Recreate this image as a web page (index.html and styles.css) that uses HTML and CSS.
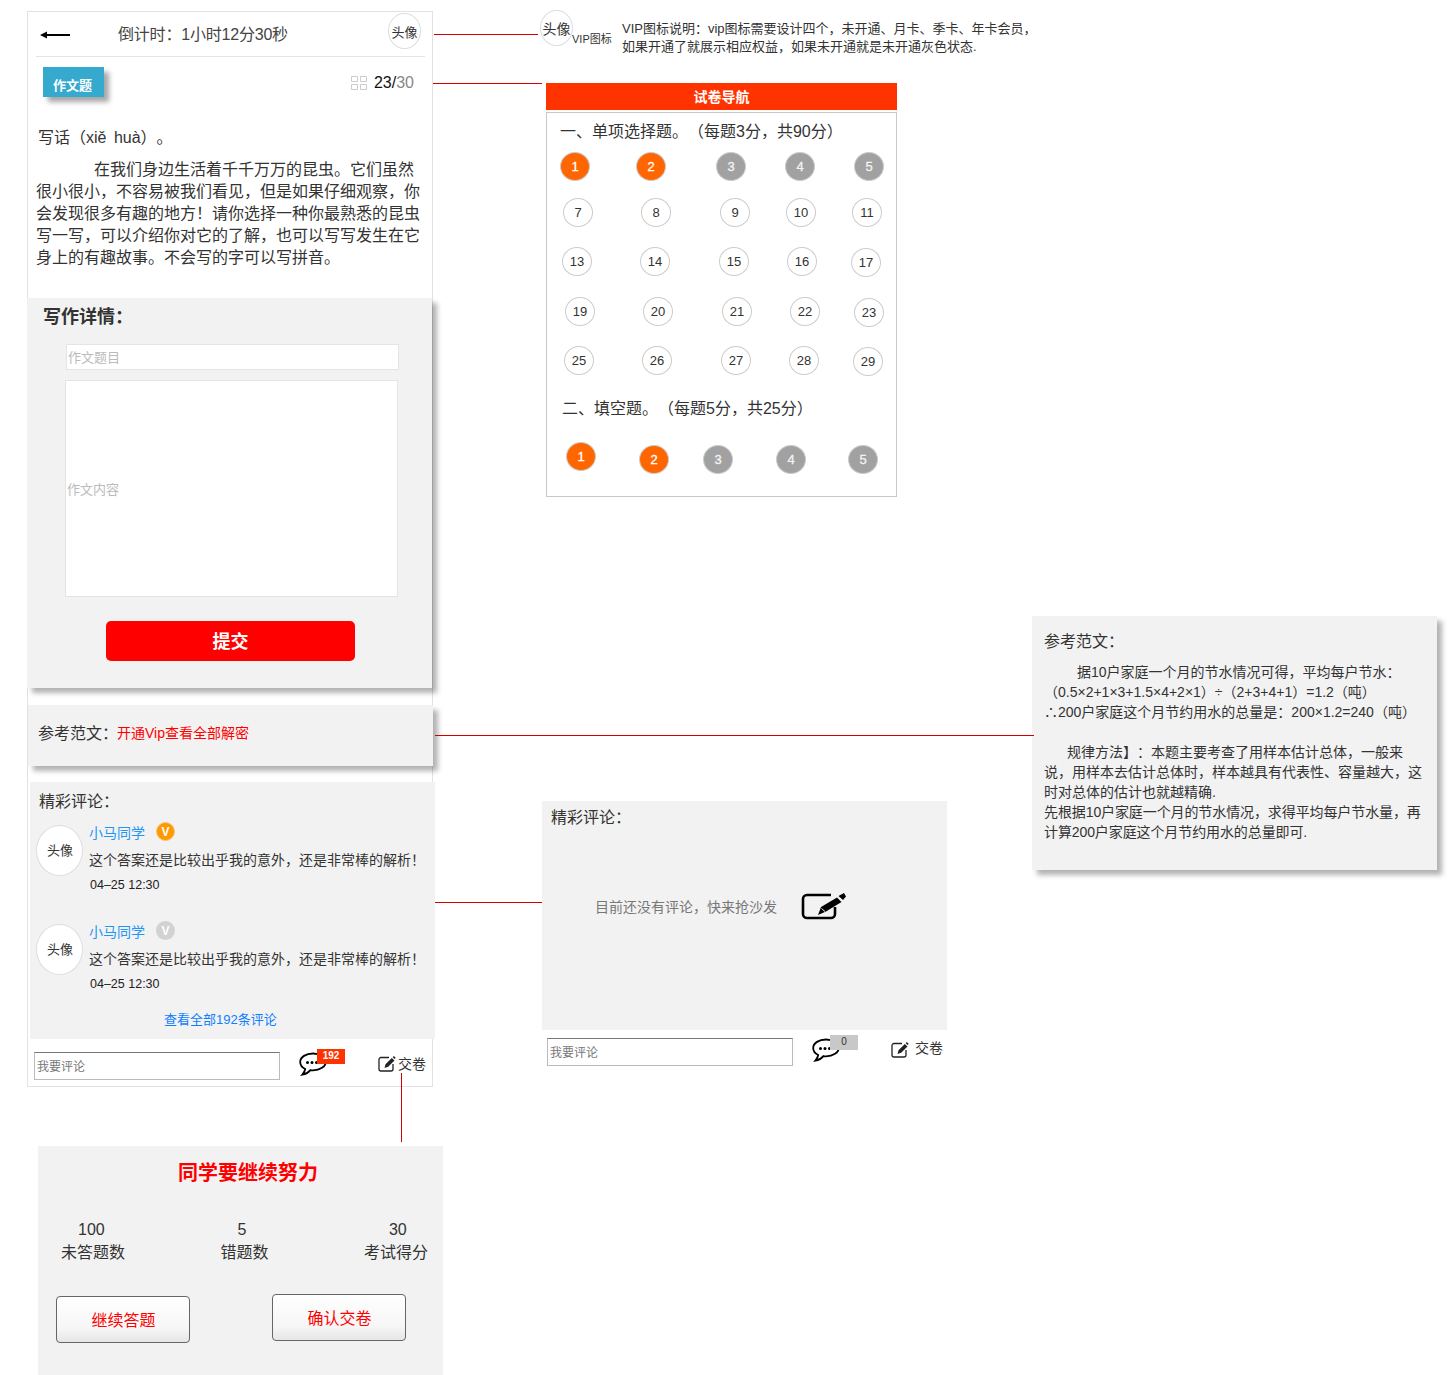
FILE: index.html

```html
<!DOCTYPE html>
<html lang="zh-CN">
<head>
    <meta charset="UTF-8" />
    <meta name="viewport" content="width=device-width, initial-scale=1.0"/>
    <title>作文题原型</title>
    <link rel="stylesheet" href="styles.css">
</head>
<body>
<div class="canvas">

    <!-- annotation lines -->
    <div class="line line-avatar"></div>
    <div class="line line-nav"></div>
    <div class="line line-ref"></div>
    <div class="line line-empty"></div>
    <div class="line line-submit"></div>

    <!-- main phone frame -->
    <div class="phone">
        <div class="top-bar">
            <svg class="back" width="30" height="8" viewBox="0 0 30 8"><path d="M0 4 7 .5v2.600h23v1.800H7v2.600z" fill="#000"/></svg>
            <span class="countdown">倒计时：1小时12分30秒</span>
            <span class="avatar avatar-top">头像</span>
        </div>
        <div class="meta-row">
            <span class="tag">作文题</span>
            <span class="progress">
                <svg width="16" height="14" viewBox="0 0 16 14"><path d="M.5.5h6v5h-6zM9.500.5h6v5h-6zM.5 8.500h6v5h-6zM9.500 8.500h6v5h-6z" fill="none" stroke="#ccc"/></svg>
                <span class="progress-now">23/</span><span class="progress-all">30</span>
            </span>
        </div>
        <p class="question">写话（xiě huà）。</p>
        <p class="question-body">在我们身边生活着千千万万的昆虫。它们虽然很小很小，不容易被我们看见，但是如果仔细观察，你会发现很多有趣的地方！请你选择一种你最熟悉的昆虫写一写，可以介绍你对它的了解，也可以写写发生在它身上的有趣故事。不会写的字可以写拼音。</p>

        <div class="writing panel-shadow">
            <h2 class="writing-title">写作详情：</h2>
            <div class="field field-title">作文题目</div>
            <div class="field field-content">作文内容</div>
            <div class="submit">提交</div>
        </div>

        <div class="unlock panel-shadow">
            <span>参考范文：</span><span class="unlock-link">开通Vip查看全部解密</span>
        </div>

        <div class="comments">
            <div class="comments-title">精彩评论：</div>
            <div class="comment comment-first">
                <span class="avatar avatar-comment">头像</span>
                <div class="comment-main">
                    <div class="comment-name">小马同学<span class="vip vip-on">V</span></div>
                    <div class="comment-text">这个答案还是比较出乎我的意外，还是非常棒的解析！</div>
                    <div class="comment-date">04–25 12:30</div>
                </div>
            </div>
            <div class="comment">
                <span class="avatar avatar-comment">头像</span>
                <div class="comment-main">
                    <div class="comment-name">小马同学<span class="vip vip-off">V</span></div>
                    <div class="comment-text">这个答案还是比较出乎我的意外，还是非常棒的解析！</div>
                    <div class="comment-date">04–25 12:30</div>
                </div>
            </div>
            <div class="comments-all">查看全部192条评论</div>
        </div>

        <div class="reply-bar">
            <div class="reply-input">我要评论</div>
            <span class="chat">
                <svg width="28" height="24" viewBox="0 0 28 24"><path d="M14 1.500C7 1.500 1.200 5 1.200 10c0 3 2 5.600 5 7-.3 2-1.400 4-2.800 5.600 3-.5 6-2 8-4.500 1 .2 1.700.2 2.600.2 7 0 12.800-3.800 12.800-8.300S21 1.500 14 1.500z" fill="#fff" stroke="#000" stroke-width="1.800"/><circle cx="8.500" cy="10.500" r="1.500"/><circle cx="13" cy="10.500" r="1.500"/><circle cx="17.500" cy="10.500" r="1.500"/></svg>
                <span class="chat-badge">192</span>
            </span>
            <span class="hand-in">
                <svg width="18" height="16" viewBox="0 0 18 16"><path d="M11 1.500H3a2 2 0 0 0-2 2V13a2 2 0 0 0 2 2h10a2 2 0 0 0 2-2V8" fill="none" stroke="#222" stroke-width="1.300"/><path d="m6.500 12 1-3.800L13.800 2l2.700 2.500-6.300 6.300zM14.700 1.200l1-1.200 2 1.800-1 1.300z" fill="#222"/></svg>
                <span>交卷</span>
            </span>
        </div>
    </div>

    <!-- vip note -->
    <span class="avatar avatar-note">头像</span>
    <span class="vip-label">VIP图标</span>
    <p class="vip-note">VIP图标说明：vip图标需要设计四个，未开通、月卡、季卡、年卡会员，<br>如果开通了就展示相应权益，如果未开通就是未开通灰色状态.</p>

    <!-- paper navigation -->
    <div class="nav">
        <div class="nav-head">试卷导航</div>
        <div class="nav-body">
            <h3 class="nav-section">一、单项选择题。（每题3分，共90分）</h3>
            <div class="q-row row-1">
                <span class="q q-done">1</span><span class="q q-done">2</span><span class="q q-gray">3</span><span class="q q-gray">4</span><span class="q q-gray">5</span>
            </div>
            <div class="q-row row-2">
                <span class="q">7</span><span class="q">8</span><span class="q">9</span><span class="q">10</span><span class="q">11</span>
            </div>
            <div class="q-row row-3">
                <span class="q">13</span><span class="q">14</span><span class="q">15</span><span class="q">16</span><span class="q q-low">17</span>
            </div>
            <div class="q-row row-4">
                <span class="q">19</span><span class="q">20</span><span class="q">21</span><span class="q">22</span><span class="q q-low">23</span>
            </div>
            <div class="q-row row-5">
                <span class="q">25</span><span class="q">26</span><span class="q">27</span><span class="q">28</span><span class="q q-low">29</span>
            </div>
            <h3 class="nav-section nav-section-two">二、填空题。（每题5分，共25分）</h3>
            <div class="q-row row-6">
                <span class="q q-done q-high">1</span><span class="q q-done">2</span><span class="q q-gray">3</span><span class="q q-gray">4</span><span class="q q-gray">5</span>
            </div>
        </div>
    </div>

    <!-- reference answer -->
    <div class="sample panel-shadow">
        <div class="sample-title">参考范文：</div>
        <div class="sample-text">
            <p class="sample-indent-a">据10户家庭一个月的节水情况可得，平均每户节水：<br><span class="sample-out">（0.5×2+1×3+1.5×4+2×1）÷（2+3+4+1）=1.2（吨）</span><br><span class="sample-out">∴200户家庭这个月节约用水的总量是：200×1.2=240（吨）</span></p>
            <p class="sample-indent-b">规律方法】：本题主要考查了用样本估计总体，一般来说，用样本去估计总体时，样本越具有代表性、容量越大，这时对总体的估计也就越精确.</p>
            <p class="sample-plain">先根据10户家庭一个月的节水情况，求得平均每户节水量，再<br>计算200户家庭这个月节约用水的总量即可.</p>
        </div>
    </div>

    <!-- no comments state -->
    <div class="empty">
        <div class="empty-panel">
            <div class="empty-title">精彩评论：</div>
            <div class="empty-row">
                <span class="empty-text">目前还没有评论，快来抢沙发</span>
                <svg width="45" height="27" viewBox="0 0 45 27"><path d="M30 2H6a4 4 0 0 0-4 4v15a4 4 0 0 0 4 4h24a4 4 0 0 0 4-4v-7" fill="none" stroke="#000" stroke-width="2.600"/><path d="m17 22 3-8L36 4.500l4.500 4.500L25 18.500zM37.500 3l5.500-3 2 3.500-3 3.500z" fill="#000"/><path d="m20.500 15.500 3.500 3" stroke="#f2f2f2"/></svg>
            </div>
        </div>
        <div class="reply-bar reply-bar-empty">
            <div class="reply-input">我要评论</div>
            <span class="chat">
                <svg width="28" height="24" viewBox="0 0 28 24"><path d="M14 1.500C7 1.500 1.200 5 1.200 10c0 3 2 5.600 5 7-.3 2-1.400 4-2.800 5.600 3-.5 6-2 8-4.500 1 .2 1.700.2 2.600.2 7 0 12.800-3.800 12.800-8.300S21 1.500 14 1.500z" fill="#fff" stroke="#000" stroke-width="1.800"/><circle cx="8.500" cy="10.500" r="1.500"/><circle cx="13" cy="10.500" r="1.500"/><circle cx="17.500" cy="10.500" r="1.500"/></svg>
                <span class="chat-badge chat-badge-zero">0</span>
            </span>
            <span class="hand-in">
                <svg width="18" height="16" viewBox="0 0 18 16"><path d="M11 1.500H3a2 2 0 0 0-2 2V13a2 2 0 0 0 2 2h10a2 2 0 0 0 2-2V8" fill="none" stroke="#222" stroke-width="1.300"/><path d="m6.500 12 1-3.800L13.800 2l2.700 2.500-6.300 6.300zM14.700 1.200l1-1.200 2 1.800-1 1.300z" fill="#222"/></svg>
                <span>交卷</span>
            </span>
        </div>
    </div>

    <!-- hand in dialog -->
    <div class="result">
        <h2 class="result-title">同学要继续努力</h2>
        <div class="stats">
            <div class="stat"><div class="stat-num stat-num-a">100</div><div>未答题数</div></div>
            <div class="stat"><div class="stat-num stat-num-b">5</div><div>错题数</div></div>
            <div class="stat"><div class="stat-num stat-num-c">30</div><div>考试得分</div></div>
        </div>
        <div class="result-buttons">
            <div class="result-btn">继续答题</div>
            <div class="result-btn result-btn-right">确认交卷</div>
        </div>
    </div>

</div>
</body>
</html>
```

FILE: styles.css

```css
* {
    box-sizing: border-box;
}
html, body {
    margin: 0;
    padding: 0;
}
body {
    background-color: white;
    color: #333;
    font-family: "Liberation Sans", "Noto Sans CJK SC", sans-serif;
    font-size: 16px;
    text-spacing-trim: space-all;
}
h2, h3, p {
    margin: 0;
    font-size: 16px;
    font-weight: normal;
}
.canvas {
    position: relative;
    width: 1448px;
    height: 1375px;
    overflow: hidden;
}
.panel-shadow {
    box-shadow: 5px 5px 5px rgba(0, 0, 0, 0.3);
}

/* annotation lines */
.line {
    position: absolute;
    z-index: 1;
    background-color: #d40000;
}
.line-avatar { left: 434px; top: 34px; width: 104px; height: 1px; }
.line-nav { left: 433px; top: 83px; width: 109px; height: 1px; }
.line-ref { left: 435px; top: 735px; width: 599px; height: 1px; }
.line-empty { left: 435px; top: 902px; width: 107px; height: 1px; }
.line-submit { left: 401px; top: 1073px; width: 1px; height: 69px; }

.avatar {
    display: flex;
    align-items: center;
    justify-content: center;
    flex-shrink: 0;
    background-color: white;
    border: 1px solid #ddd;
    border-radius: 50%;
    color: #333;
}

/* phone frame */
.phone {
    position: absolute;
    left: 27px;
    top: 11px;
    width: 406px;
    height: 1076px;
    border: 1px solid #e2e2e2;
}
.top-bar {
    display: flex;
    align-items: center;
    height: 45px;
    margin: 0 7px 0 8px;
    border-bottom: 1px solid #e4e4e4;
}
.back {
    margin-left: 4px;
    margin-top: 1px;
}
.countdown {
    margin-left: 48px;
    margin-top: -2px;
    color: #444;
    letter-spacing: -0.2px;
}
.avatar-top {
    width: 33px;
    height: 36px;
    margin-left: auto;
    margin-bottom: 6px;
    margin-right: 4px;
    font-size: 13px;
}
.meta-row {
    display: flex;
    justify-content: space-between;
    align-items: center;
    padding: 10px 18px 0 15px;
}
.tag {
    width: 61px;
    height: 30px;
    padding: 10px 2px 0 0;
    background-color: #36a9ce;
    box-shadow: 5px 5px 5px rgba(0, 0, 0, 0.35);
    color: white;
    font-size: 13px;
    font-weight: bold;
    line-height: 18px;
    text-align: center;
}
.progress {
    display: flex;
    align-items: center;
    margin-top: 2px;
    font-size: 16px;
}
.progress svg {
    margin-right: 7px;
}
.progress-now {
    color: #111;
}
.progress-all {
    color: #888;
}
.question {
    margin: 30px 0 0 10px;
    line-height: 22px;
    word-spacing: 3px;
}
.question-body {
    width: 386px;
    margin: 10px 0 0 8px;
    line-height: 22px;
    text-indent: 58px;
}
.writing {
    width: 405px;
    height: 390px;
    margin: 29px 0 0 -1px;
    padding-top: 7px;
    background-color: #f2f2f2;
}
.writing-title {
    margin-left: 16px;
    font-size: 18px;
    font-weight: bold;
    line-height: 24px;
}
.field {
    display: flex;
    align-items: center;
    width: 333px;
    padding-left: 1px;
    background-color: white;
    border: 1px solid #e4e4e4;
    color: #bbb;
    font-size: 13px;
}
.field-title {
    height: 26px;
    margin: 15px 0 0 39px;
    padding-bottom: 2px;
}
.field-content {
    height: 217px;
    margin: 10px 0 0 38px;
}
.submit {
    width: 249px;
    height: 40px;
    margin: 24px 0 0 79px;
    padding-top: 1px;
    background-color: #ff0000;
    border-radius: 5px;
    color: white;
    font-size: 18px;
    font-weight: bold;
    line-height: 40px;
    text-align: center;
}
.unlock {
    display: flex;
    align-items: center;
    width: 405px;
    height: 61px;
    margin-top: 17px;
    padding: 0 0 7px 10px;
    background-color: #f2f2f2;
}
.unlock-link {
    margin-left: -1px;
    color: #ff0000;
    font-size: 14px;
}
.comments {
    width: 405px;
    height: 257px;
    margin: 16px 0 0 2px;
    padding-top: 9px;
    background-color: #f2f2f2;
}
.comments-title {
    margin-left: 9px;
    line-height: 22px;
}
.comment {
    display: flex;
    margin: 12px 0 0 6px;
}
.comment-first {
    margin-bottom: 31px;
}
.comment + .comment {
    margin-top: 0;
}
.avatar-comment {
    width: 47px;
    height: 51px;
    padding: 0 0 2px 1px;
    font-size: 13px;
}
.comment-main {
    margin-left: 6px;
}
.comment-name {
    display: flex;
    align-items: center;
    height: 19px;
    margin-top: -3px;
    color: #1e96f5;
    font-size: 14px;
}
.vip {
    display: flex;
    align-items: center;
    justify-content: center;
    width: 19px;
    height: 19px;
    margin-left: 11px;
    border-radius: 50%;
    color: white;
    font-size: 12px;
    font-weight: bold;
}
.vip-on {
    background-color: #ff9900;
    border: 1px solid #f3c47d;
}
.vip-off {
    background-color: #d2d2d2;
}
.comment-text {
    margin-top: 9px;
    font-size: 14px;
    line-height: 20px;
    white-space: nowrap;
}
.comment-date {
    margin: 7px 0 0 1px;
    color: #222;
    font-size: 12.5px;
    line-height: 16px;
}
.comments-all {
    margin: 19px 0 0 134px;
    color: #0f7fff;
    font-size: 13px;
    line-height: 18px;
}

/* reply bar */
.reply-bar {
    display: flex;
    align-items: flex-start;
    padding: 13px 0 0 6px;
}
.reply-input {
    width: 246px;
    height: 28px;
    padding: 1px 0 0 2px;
    background-color: white;
    border: 1px solid #bbb;
    border-top: 1px solid #777;
    color: #777;
    font-size: 12px;
    line-height: 27px;
}
.chat {
    position: relative;
    margin-left: 19px;
    height: 24px;
}
.chat-badge {
    position: absolute;
    left: 18px;
    top: -3px;
    width: 28px;
    height: 15px;
    background-color: #ff3300;
    color: white;
    font-size: 10px;
    font-weight: bold;
    line-height: 13px;
    text-align: center;
}
.chat-badge-zero {
    background-color: #c8c8c8;
    color: #333;
    font-weight: normal;
}
.hand-in {
    display: flex;
    align-items: center;
    height: 16px;
    margin: 4px 0 0 51px;
    font-size: 14px;
    line-height: 16px;
}
.hand-in svg {
    margin-right: 2px;
}

/* vip note */
.avatar-note {
    position: absolute;
    left: 540px;
    top: 10px;
    width: 33px;
    height: 36px;
    font-size: 14px;
}
.vip-label {
    position: absolute;
    left: 572px;
    top: 32px;
    font-size: 11px;
    line-height: 14px;
}
.vip-note {
    position: absolute;
    left: 622px;
    top: 20px;
    width: 430px;
    font-size: 13px;
    line-height: 18px;
    white-space: nowrap;
}

/* paper navigation */
.nav {
    position: absolute;
    left: 546px;
    top: 83px;
    width: 351px;
}
.nav-head {
    height: 27px;
    background-color: #ff3300;
    color: white;
    font-size: 14px;
    font-weight: bold;
    line-height: 28px;
    text-align: center;
}
.nav-body {
    height: 385px;
    margin-top: 2px;
    padding-top: 8px;
    border: 1px solid #c8c8c8;
}
.nav-section {
    margin: 0 0 9px 13px;
    line-height: 22px;
    white-space: nowrap;
}
.nav-section-two {
    margin: 23px 0 0 15px;
}
.q-row {
    display: grid;
    height: 29px;
}
.row-1 {
    grid-template-columns: 76px 80px 69px 69px 30px;
    margin-left: 13px;
}
.row-2 {
    grid-template-columns: 78px 79px 66px 66px 30px;
    margin: 17px 0 0 16px;
}
.row-3 {
    grid-template-columns: 78px 79px 68px 64px 30px;
    margin: 20px 0 0 15px;
}
.row-4 {
    grid-template-columns: 78px 79px 68px 64px 30px;
    margin: 21px 0 0 18px;
}
.row-5 {
    grid-template-columns: 78px 79px 68px 64px 30px;
    margin: 20px 0 0 17px;
}
.row-6 {
    grid-template-columns: 73px 64px 73px 72px 30px;
    margin: 25px 0 0 19px;
}
.q {
    display: flex;
    align-items: center;
    justify-content: center;
    width: 30px;
    height: 29px;
    border: 1px solid #ccc;
    border-radius: 50%;
    color: #333;
    font-size: 13px;
}
.q-done {
    background-color: #ff6600;
    color: white;
    -webkit-text-stroke: 0.3px white;
}
.q-gray {
    background-color: #a1a1a1;
    color: #f4f4f4;
    -webkit-text-stroke: 0.3px #f4f4f4;
}
.q-low {
    margin-top: 1px;
}
.q-high {
    margin-top: -3px;
}

/* reference answer */
.sample {
    position: absolute;
    left: 1032px;
    top: 616px;
    width: 405px;
    height: 254px;
    padding: 15px 14px 0 12px;
    background-color: #f2f2f2;
}
.sample-title {
    line-height: 22px;
}
.sample-text {
    margin-top: 9px;
    font-size: 14px;
    line-height: 20px;
}
.sample-indent-a {
    margin-bottom: 20px;
    font-size: 14px;
    text-indent: 33px;
}
.sample-out {
    display: inline-block;
    text-indent: 0;
    white-space: nowrap;
}
.sample-indent-b {
    font-size: 14px;
    text-indent: 23px;
}
.sample-plain {
    font-size: 14px;
    letter-spacing: -0.1px;
    white-space: nowrap;
}

/* no comments state */
.empty {
    position: absolute;
    left: 542px;
    top: 801px;
    width: 405px;
}
.empty-panel {
    height: 229px;
    padding: 6px 0 0 9px;
    background-color: #f2f2f2;
}
.empty-title {
    line-height: 22px;
}
.empty-row {
    display: flex;
    align-items: center;
    margin: 64px 0 0 44px;
    color: #777;
    font-size: 14px;
}
.empty-text {
    margin-top: -2px;
}
.empty-row svg {
    margin-left: 24px;
}
.reply-bar-empty {
    padding: 8px 0 0 5px;
}
.reply-bar-empty .hand-in svg {
    margin-right: 6px;
}
.reply-bar-empty .hand-in span {
    margin-top: -4px;
}

/* hand in dialog */
.result {
    position: absolute;
    left: 38px;
    top: 1146px;
    width: 405px;
    height: 229px;
    padding-top: 13px;
    background-color: #f2f2f2;
}
.result-title {
    padding-left: 15px;
    color: #ff0000;
    font-size: 20px;
    font-weight: bold;
    line-height: 28px;
    text-align: center;
}
.stats {
    display: flex;
    justify-content: space-between;
    margin-top: 31px;
    padding: 0 15px 0 23px;
    line-height: 23px;
}
.stat-num-a { padding-left: 17px; }
.stat-num-b { padding-left: 17px; }
.stat-num-c { padding-left: 25px; }
.result-buttons {
    display: flex;
    align-items: flex-start;
    margin: 32px 0 0 18px;
}
.result-btn {
    width: 134px;
    height: 47px;
    padding-left: 1px;
    background: linear-gradient(#fff, #f6f6f6 70%, #e6e6e6);
    border: 1px solid #666;
    border-radius: 4px;
    color: #ff0000;
    line-height: 47px;
    text-align: center;
}
.result-btn-right {
    margin: -2px 0 0 82px;
}
```
